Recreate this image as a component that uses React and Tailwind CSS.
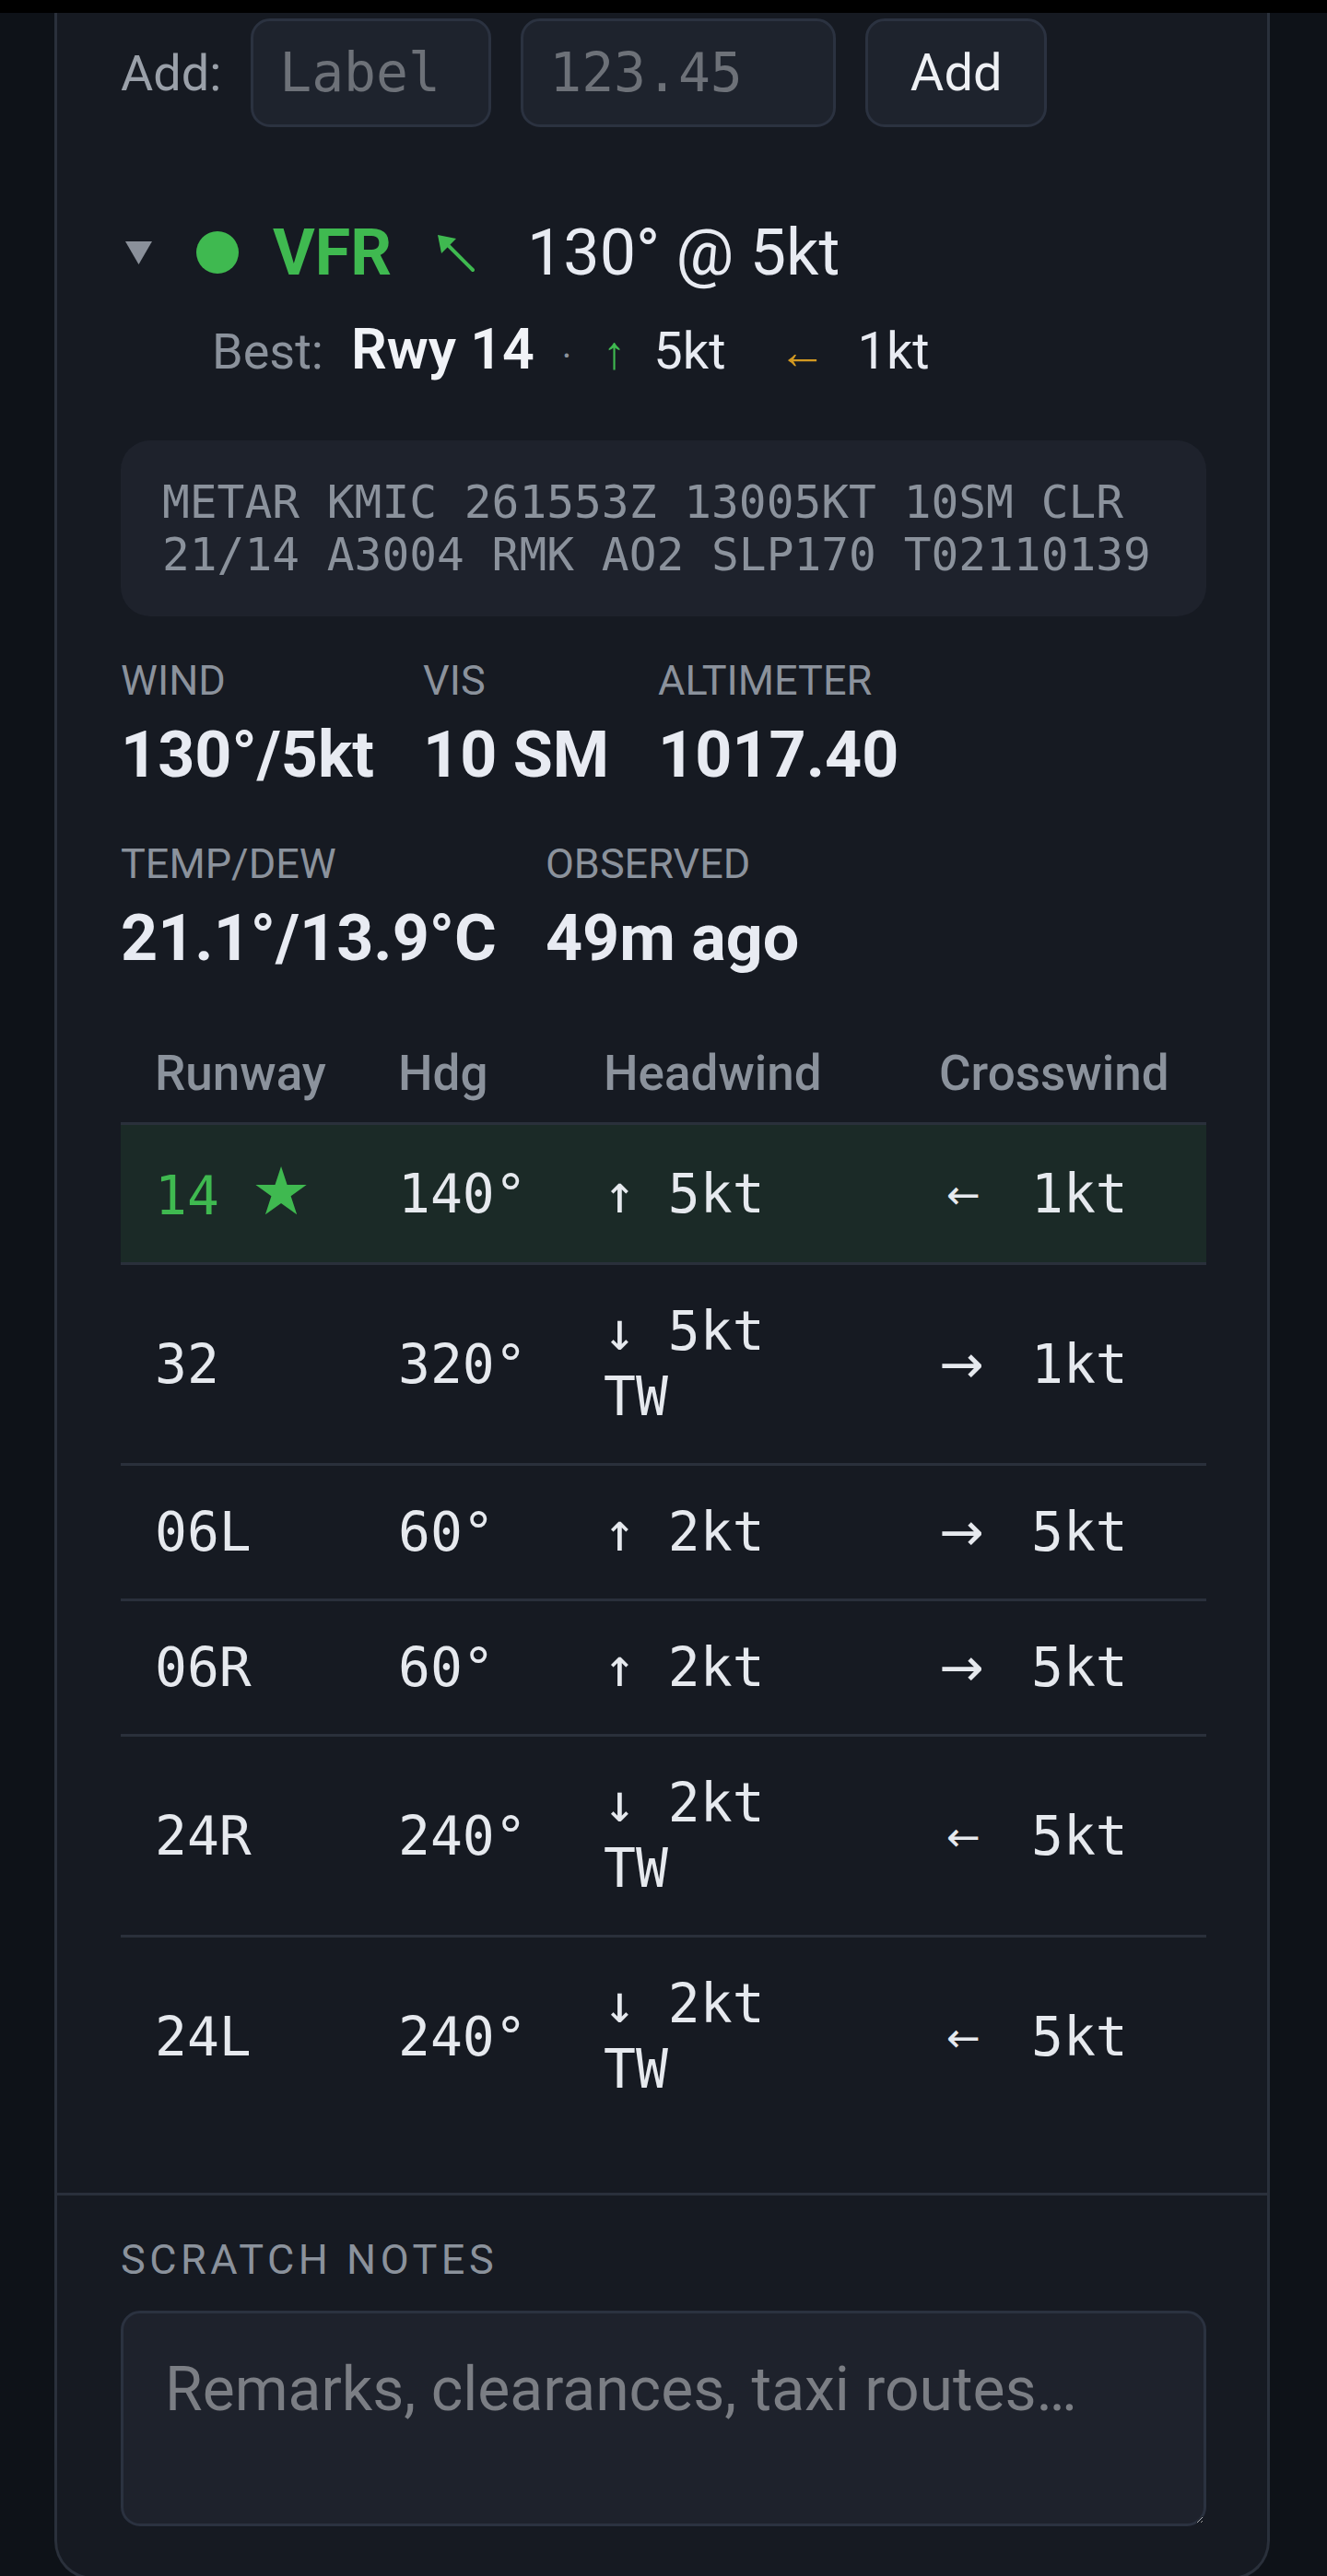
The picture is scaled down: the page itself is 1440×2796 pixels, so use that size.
const SANS = "font-['Roboto',sans-serif]";
const MONO = "font-['DejaVu_Sans_Mono',monospace]";

const runways = [
  { id: '14', hdg: '140°', head: '↑ 5kt', cross: '←', xkt: '1kt', best: true },
  { id: '32', hdg: '320°', head: '↓ 5kt TW', cross: '→', xkt: '1kt' },
  { id: '06L', hdg: '60°', head: '↑ 2kt', cross: '→', xkt: '5kt' },
  { id: '06R', hdg: '60°', head: '↑ 2kt', cross: '→', xkt: '5kt' },
  { id: '24R', hdg: '240°', head: '↓ 2kt TW', cross: '←', xkt: '5kt' },
  { id: '24L', hdg: '240°', head: '↓ 2kt TW', cross: '←', xkt: '5kt' },
];

function Stat({ label, value }) {
  return (
    <div className="flex flex-col">
      <div className="text-[45px] leading-[60px] uppercase text-[#8b929c]">{label}</div>
      <div className="mt-[8px] text-[70px] leading-[84px] font-bold text-[#e8ebf2]">{value}</div>
    </div>
  );
}

function WindArrow() {
  return (
    <svg viewBox="0 0 50 50" className="w-[50px] h-[50px]">
      <line x1="44" y1="44" x2="12" y2="12" stroke="#3fb950" strokeWidth="4" strokeLinecap="round" />
      <polygon points="6,6 26,10 10,26" fill="#3fb950" />
    </svg>
  );
}

export default function App() {
  return (
    <div className={`min-h-screen bg-[#0e1218] ${SANS}`}>
      <div className="h-[14px] bg-black" />
      <div className="ml-[59px] mr-[62px] bg-[#161a22] border-x-[3px] border-b-[3px] border-[#2a303b] rounded-b-[42px]">
        <div className="pl-[69px] pr-[66px] pt-[6px] pb-[62px]">
          {/* frequency add row */}
          <div className="flex items-center gap-[32px] h-[118px]">
            <span className="text-[54px] text-[#9aa0a9]">Add:</span>
            <input
              placeholder="Label"
              className={`w-[261px] h-[118px] px-[28px] bg-[#1e232d] border-[3px] border-[#2b3240] rounded-[21px] text-[58px] text-[#e6e9ee] placeholder:text-[#6d7178] outline-none ${MONO}`}
            />
            <input
              placeholder="123.45"
              className={`w-[342px] h-[118px] px-[28px] bg-[#1e232d] border-[3px] border-[#2b3240] rounded-[21px] text-[58px] text-[#e6e9ee] placeholder:text-[#6d7178] outline-none ${MONO}`}
            />
            <button className="w-[197px] h-[118px] bg-[#1e232d] border-[3px] border-[#2b3240] rounded-[21px] text-[56px] text-[#eef0f4]">
              Add
            </button>
          </div>

          {/* station header */}
          <div className="mt-[87px] h-[98px] flex items-center">
            <svg viewBox="0 0 29 25" className="ml-[5px] w-[29px] h-[25px]">
              <polygon points="0,0 29,0 14.5,25" fill="#8a909a" />
            </svg>
            <span className="ml-[48px] w-[46px] h-[46px] rounded-full bg-[#3fb950]" />
            <span className="ml-[37px] text-[70px] leading-[98px] font-bold text-[#3fb950]">VFR</span>
            <span className="ml-[44px]">
              <WindArrow />
            </span>
            <span className="ml-[53px] text-[70px] leading-[98px] text-[#e8ebf2]">130° @ 5kt</span>
          </div>

          <div className="mt-[14px] pl-[99px] flex items-baseline leading-[84px]">
            <span className="text-[54px] text-[#8b929c]">Best:</span>
            <span className="ml-[30px] text-[61px] font-semibold text-[#f1f3f7]">Rwy 14</span>
            <span className="ml-[30px] text-[40px] text-[#8b929c]">·</span>
            <span className="ml-[34px] text-[50px] text-[#3fb950]">↑</span>
            <span className="ml-[30px] text-[56px] text-[#e8ebf2]">5kt</span>
            <span className="ml-[57px] text-[52px] text-[#d29922]">←</span>
            <span className="ml-[34px] text-[56px] text-[#e8ebf2]">1kt</span>
          </div>

          {/* raw metar */}
          <div className={`mt-[49px] bg-[#1e222c] rounded-[32px] pt-[39px] pb-[38px] px-[45px] text-[49.5px] leading-[57px] text-[#8b929c] ${MONO}`}>
            METAR KMIC 261553Z 13005KT 10SM CLR 21/14 A3004 RMK AO2 SLP170 T02110139
          </div>

          <div className="mt-[40px] flex flex-wrap gap-x-[53px] gap-y-[47px]">
            <Stat label="Wind" value="130°/5kt" />
            <Stat label="Vis" value="10 SM" />
            <Stat label="Altimeter" value="1017.40" />
            <Stat label="Temp/Dew" value="21.1°/13.9°C" />
            <Stat label="Observed" value="49m ago" />
          </div>

          {/* runway table */}
          <div className="mt-[52px]">
            <div className="grid grid-cols-[264px_223px_364px_1fr] text-[53px] leading-[70px] font-medium text-[#8b929c] pt-[18px] pb-[18px]">
              <div className="px-[37px]">Runway</div>
              <div className="px-[37px]">Hdg</div>
              <div className="px-[37px]">Headwind</div>
              <div className="px-[37px]">Crosswind</div>
            </div>
            {runways.map((r) => (
              <div
                key={r.id}
                className={`grid grid-cols-[264px_223px_364px_1fr] items-center border-t-[3px] border-[#2a303b] pt-[37px] pb-[36px] text-[58px] leading-[71px] ${MONO} ${
                  r.best ? 'bg-[#1b2a27]' : ''
                }`}
              >
                <div className={`px-[37px] ${r.best ? 'text-[#3fb950]' : 'text-[#e6e9ee]'}`}>
                  {r.id}
                  {r.best && <span className="ml-[35px] text-[72px] font-['DejaVu_Sans',sans-serif]">★</span>}
                </div>
                <div className="px-[37px] text-[#e6e9ee]">{r.hdg}</div>
                <div className="px-[37px] text-[#e6e9ee]">
                  <span className="block max-w-[260px]">{r.head}</span>
                </div>
                <div className="px-[37px] text-[#e6e9ee] flex items-center">
                  <span
                    className={`inline-block w-[100px] font-['DejaVu_Sans',sans-serif] ${
                      r.cross === '←' ? 'text-[44px] pl-[8px]' : 'text-[58px]'
                    }`}
                  >
                    {r.cross}
                  </span>
                  {r.xkt}
                </div>
              </div>
            ))}
          </div>
        </div>

        {/* notes */}
        <div className="border-t-[3px] border-[#2a303b] pl-[69px] pr-[66px] pt-[40px] pb-[55px]">
          <div className="text-[45px] leading-[60px] uppercase tracking-widest text-[#8b929c]">Scratch notes</div>
          <textarea
            placeholder="Remarks, clearances, taxi routes…"
            className="mt-[25px] block w-full h-[234px] px-[45px] py-[33px] bg-[#1e222c] border-[3px] border-[#2b3240] rounded-[21px] text-[66px] text-[#e6e9ee] placeholder:text-[#7b7e84] outline-none"
          />
        </div>
      </div>
    </div>
  );
}
